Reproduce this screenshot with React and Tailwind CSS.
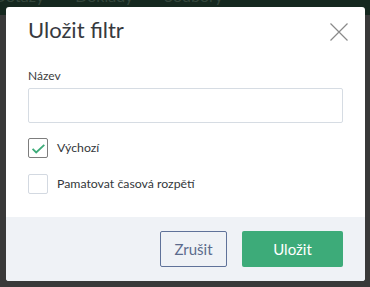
export default function App() {
  return (
    <div className="relative h-[287px] w-[370px] overflow-hidden bg-[#393939] font-['Lato',sans-serif]">
      <div className="h-[29px] bg-[#15281f]">
        <div className="-mt-[14px] flex text-[16px] leading-[19px] text-[#34463c]">
          <span className="-ml-[6px]">Dotazy</span>
          <span className="ml-[31px]">Doklady</span>
          <span className="ml-[31px]">Soubory</span>
        </div>
      </div>

      <div className="absolute left-[6px] top-[7px] flex h-[274px] w-[359px] flex-col overflow-hidden rounded-[3px] bg-white">
        <h2 className="px-[22px] pt-[10px] text-[22px] leading-[26px] text-[#373a3e]">Uložit filtr</h2>
        <button type="button" className="absolute right-[17px] top-[16px] h-[18px] w-[18px]">
          <svg viewBox="0 0 18 18" className="h-[18px] w-[18px]" fill="none" stroke="#8a8a8a" strokeWidth="1.2">
            <path d="M0.5 0.5L17.5 17.5M17.5 0.5L0.5 17.5" />
          </svg>
        </button>

        <div className="px-[22px]">
          <label className="mt-[26px] block text-[12px] leading-[14px] text-[#3d3d3d]">Název</label>
          <input type="text" className="mt-[5px] block h-[35px] w-[315px] rounded-[2px] border border-[#d6dce3] outline-none" />

          <div className="mt-[15px] flex items-center gap-[9px]">
            <span className="flex h-[20px] w-[20px] items-center justify-center rounded-[2px] border border-[#7d7d7d]">
              <svg viewBox="0 0 20 20" className="h-[20px] w-[20px]" fill="none" stroke="#3dab79" strokeWidth="2">
                <path d="M4 11l4 4 9-8.5" />
              </svg>
            </span>
            <span className="text-[12.3px] text-[#33373b]">Výchozí</span>
          </div>
          <div className="mt-[16px] flex items-center gap-[9px]">
            <span className="h-[20px] w-[20px] rounded-[2px] border border-[#d3d9e1]" />
            <span className="text-[12.3px] text-[#33373b]">Pamatovat časová rozpětí</span>
          </div>
        </div>

        <div className="mt-auto flex h-[64px] items-center justify-end gap-[15px] bg-[#eff2f6] px-[22px]">
          <button type="button" className="h-[36px] w-[67px] rounded-[2px] border border-[#5f7299] text-[15px] text-[#5b6b8c]">
            Zrušit
          </button>
          <button type="button" className="h-[36px] w-[101px] rounded-[2px] bg-[#3dab79] text-[15px] text-white">
            Uložit
          </button>
        </div>
      </div>
    </div>
  )
}
